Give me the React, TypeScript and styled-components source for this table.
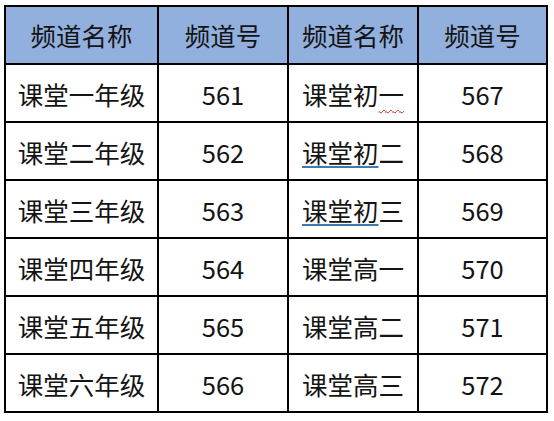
import React from "react";
import styled, { createGlobalStyle } from "styled-components";

const Global = createGlobalStyle`
  html, body { margin: 0; padding: 0; background: #ffffff; }
  body { font-family: "Noto Sans CJK SC", "Noto Sans", sans-serif; }
`;

const Page = styled.div`
  width: 554px;
  height: 421px;
  padding: 5px 0 0 4px;
  box-sizing: border-box;
  background: #fff;
`;

const Table = styled.div`
  display: grid;
  grid-template-columns: 151px 128px 128px 127px;
  grid-auto-rows: 56px;
  gap: 2px;
  padding: 2px;
  background: #000;
  width: max-content;
`;

const Cell = styled.div<{ $head?: boolean }>`
  display: flex;
  align-items: center;
  justify-content: center;
  background: ${(p) => (p.$head ? "#92b0de" : "#ffffff")};
  color: #141414;
  font-size: 25.5px;
  line-height: 1;
  font-family: "Noto Sans CJK SC", "Noto Sans", sans-serif;
  padding-top: ${(p) => (p.$head ? "0" : "2px")};
`;

const Spell = styled.span`
  text-decoration: underline wavy #d42020;
  text-decoration-thickness: 1px;
  text-underline-offset: 4px;
`;

const Grammar = styled.span`
  text-decoration: underline solid #3d7ab0;
  text-decoration-thickness: 2px;
  text-underline-offset: 3px;
`;

type Row = [React.ReactNode, string, React.ReactNode, string];

const rows: Row[] = [
  ["课堂一年级", "561", <>课堂初<Spell>一</Spell></>, "567"],
  ["课堂二年级", "562", <><Grammar>课堂初</Grammar>二</>, "568"],
  ["课堂三年级", "563", <><Grammar>课堂初</Grammar>三</>, "569"],
  ["课堂四年级", "564", "课堂高一", "570"],
  ["课堂五年级", "565", "课堂高二", "571"],
  ["课堂六年级", "566", "课堂高三", "572"],
];

export default function App() {
  return (
    <Page>
      <Global />
      <Table>
        <Cell $head>频道名称</Cell>
        <Cell $head>频道号</Cell>
        <Cell $head>频道名称</Cell>
        <Cell $head>频道号</Cell>
        {rows.map((r, i) =>
          r.map((c, j) => <Cell key={`${i}-${j}`}>{c}</Cell>)
        )}
      </Table>
    </Page>
  );
}
